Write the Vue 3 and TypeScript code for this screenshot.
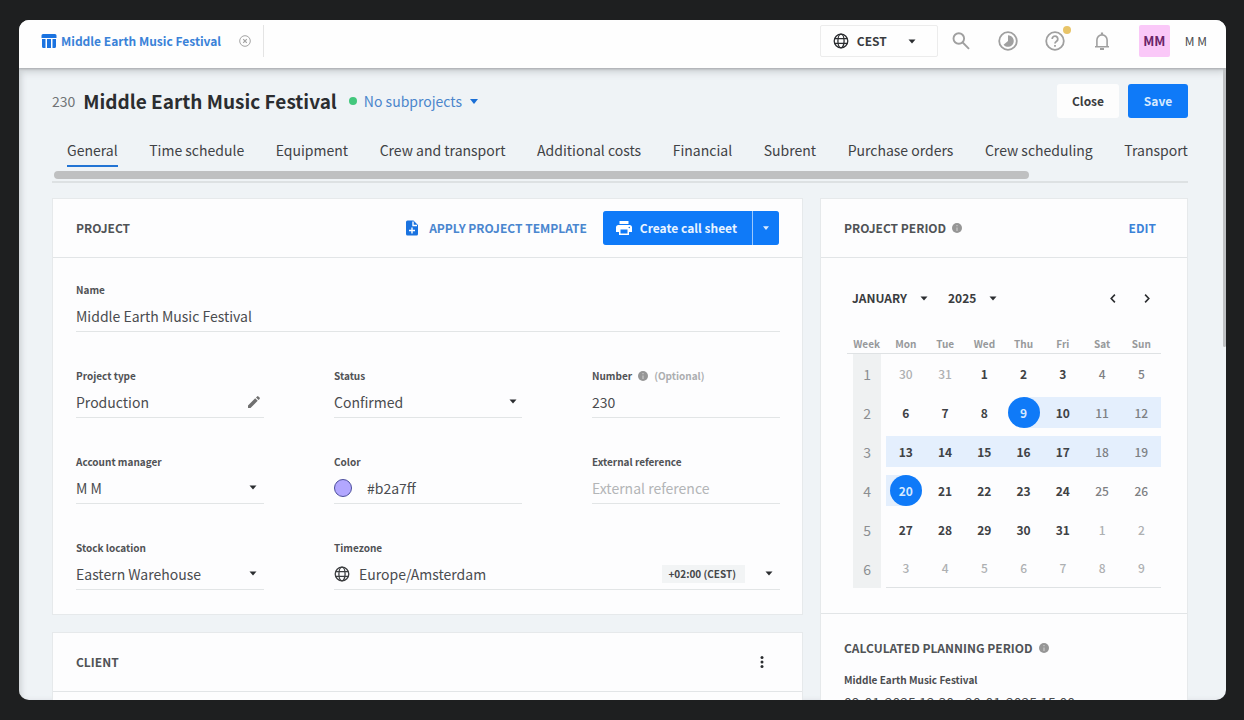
<script setup lang="ts">
import { ref } from 'vue'

interface Day {
  n: number
  kind: 'work' | 'weekend' | 'outside'
  range?: 'start' | 'mid' | 'end'
}

const tabs: string[] = [
  'General', 'Time schedule', 'Equipment', 'Crew and transport', 'Additional costs',
  'Financial', 'Subrent', 'Purchase orders', 'Crew scheduling', 'Transport',
]
const activeTab = ref('General')

const name = ref('Middle Earth Music Festival')
const projectType = ref('Production')
const projectNumber = ref('230')
const color = ref('#b2a7ff')
const externalReference = ref('')

const weekdays: string[] = ['Mon', 'Tue', 'Wed', 'Thu', 'Fri', 'Sat', 'Sun']

// January 2025 starts on a Wednesday, so the first cell is 30 December.
function buildWeeks(): Day[][] {
  return Array.from({ length: 6 }, (_, w) =>
    Array.from({ length: 7 }, (_, d): Day => {
      const offset = w * 7 + d - 1
      if (offset < 1) return { n: offset + 31, kind: 'outside' }
      if (offset > 31) return { n: offset - 31, kind: 'outside' }
      const range = offset === 9 ? 'start' : offset === 20 ? 'end' : offset > 9 && offset < 20 ? 'mid' : undefined
      return { n: offset, kind: d > 4 ? 'weekend' : 'work', range }
    }),
  )
}
const weeks = buildWeeks()
</script>

<template>
  <div class="backdrop">
    <div class="window">
      <header class="topbar">
        <div class="doc-tab">
          <svg class="icon" width="16" height="16" viewBox="0 0 16 16" fill="#1a73e0" aria-hidden="true">
            <path d="M2 1h12a1.5 1.5 0 0 1 1.500 1.500V5H.5V2.500A1.500 1.500 0 0 1 2 1z" />
            <path d="M1 6h3.500v9H2.500A1.500 1.500 0 0 1 1 13.500zM6 6h4v9H6zM11.500 6H15v7.500A1.500 1.500 0 0 1 13.500 15h-2z" />
          </svg>
          <a href="#" class="doc-link">Middle Earth Music Festival</a>
          <button class="plain close-tab" aria-label="Close tab">
            <svg width="12" height="12" viewBox="0 0 12 12" fill="none" stroke="#a3a3a3" aria-hidden="true">
              <circle cx="6" cy="6" r="5.300" />
              <path d="M4.200 4.200l3.600 3.600M7.800 4.200L4.200 7.800" stroke-width="1.200" />
            </svg>
          </button>
        </div>
        <div class="tools">
          <button class="zone">
            <svg width="16" height="16" viewBox="0 0 16 16" fill="none" stroke="#2b2d30" stroke-width="1.300" aria-hidden="true">
              <circle cx="8" cy="8" r="6.800" /><ellipse cx="8" cy="8" rx="3.100" ry="6.800" />
              <path d="M1.700 5.600h12.600M1.700 10.400h12.600" />
            </svg>
            <span class="zone-name">CEST</span>
            <svg class="caret" width="8" height="5" viewBox="0 0 8 5" aria-hidden="true"><path d="M.5.5h7L4 4.500z" /></svg>
          </button>
          <button class="plain tool" aria-label="Search">
            <svg width="20" height="20" viewBox="0 0 20 20" fill="none" stroke="#a0a0a0" stroke-width="1.900" aria-hidden="true">
              <circle cx="7.800" cy="7.500" r="5.300" /><path d="M11.700 11.500l6.300 6.300" />
            </svg>
          </button>
          <button class="plain tool" aria-label="Activity">
            <svg width="20" height="20" viewBox="0 0 20 20" aria-hidden="true">
              <circle cx="10" cy="10" r="8.800" fill="none" stroke="#a0a0a0" stroke-width="1.800" />
              <path d="M10 4.200a5.800 5.800 0 1 1-4.500 9.500L10 10z" fill="#a0a0a0" />
            </svg>
          </button>
          <button class="plain tool help" aria-label="Help">
            <svg width="20" height="20" viewBox="0 0 20 20" fill="none" stroke="#a0a0a0" stroke-width="1.800" aria-hidden="true">
              <circle cx="10" cy="10" r="8.800" />
              <path d="M7.200 8a2.800 2.800 0 1 1 4.400 2.200c-1.100.8-1.600 1.200-1.600 2.400" /><path d="M10 14v1.800" />
            </svg>
            <span class="badge"></span>
          </button>
          <button class="plain tool" aria-label="Notifications">
            <svg width="20" height="20" viewBox="0 0 20 20" fill="none" stroke="#a0a0a0" stroke-width="1.600" aria-hidden="true">
              <path d="M3 15.700h14M4.900 15.500V9a5.100 5.100 0 0 1 10.200 0v6.500" />
              <path d="M10 3.800V1.400" stroke-width="2.200" /><path d="M8 18h4" stroke-width="2" />
            </svg>
          </button>
          <span class="avatar">MM</span>
          <span class="user">M M</span>
        </div>
      </header>

      <main class="page">
        <div class="heading">
          <span class="number">230</span>
          <h1>Middle Earth Music Festival</h1>
          <span class="dot"></span>
          <button class="plain sub">No subprojects
            <svg class="caret" width="8" height="5" viewBox="0 0 8 5" aria-hidden="true"><path d="M0 0h8L4 5z" /></svg>
          </button>
          <div class="actions">
            <button class="btn">Close</button>
            <button class="btn primary">Save</button>
          </div>
        </div>

        <nav class="tabs" aria-label="Project sections">
          <div class="tab-list">
            <a
              v-for="t in tabs" :key="t" href="#" class="tab" :class="{ active: t === activeTab }"
              @click.prevent="activeTab = t"
            >{{ t }}</a>
          </div>
          <div class="track"><div class="thumb"></div></div>
        </nav>

        <div class="columns">
          <div class="left">
            <section class="card">
              <div class="card-head">
                <h2>PROJECT</h2>
                <button class="plain template">
                  <svg width="12" height="16" viewBox="0 0 12 16" aria-hidden="true">
                    <path d="M1.500.5H7.500L12 5v9a1.500 1.500 0 0 1-1.500 1.500h-9A1.500 1.500 0 0 1 0 14V2A1.500 1.500 0 0 1 1.500.5z" fill="#1a73e0" />
                    <path d="M7 1.500V5.500h4M6 7.500v6M3 10.500h6" fill="none" stroke="#fff" stroke-width="1.400" />
                  </svg>
                  APPLY PROJECT TEMPLATE
                </button>
                <div class="split">
                  <button class="split-main">
                    <svg width="16" height="14" viewBox="0 0 16 14" aria-hidden="true">
                      <path d="M3.500 0h9v3h-9zM2.500 4h11A2.500 2.500 0 0 1 16 6.500V11h-3v3H3v-3H0V6.500A2.500 2.500 0 0 1 2.500 4z" fill="#fff" />
                      <path d="M4.500 8.500h7v4h-7z" fill="#0f7af8" /><circle cx="13.300" cy="6.500" r=".8" fill="#0f7af8" />
                    </svg>
                    Create call sheet
                  </button>
                  <button class="split-more" aria-label="More call sheet options">
                    <svg class="caret" width="6" height="4" viewBox="0 0 8 5" aria-hidden="true"><path d="M0 0h8L4 5z" /></svg>
                  </button>
                </div>
              </div>
              <form class="fields" @submit.prevent>
                <div class="field full">
                  <label for="f-name">Name</label>
                  <div class="control"><input id="f-name" v-model="name" type="text"></div>
                </div>
                <div class="field">
                  <label for="f-type">Project type</label>
                  <div class="control">
                    <input id="f-type" v-model="projectType" type="text">
                    <button type="button" class="plain pencil" aria-label="Edit project type">
                      <svg width="12" height="12" viewBox="0 0 12 12" fill="#707070" aria-hidden="true">
                        <path d="M0 9.500L7.200 2.300 9.700 4.800 2.500 12H0zM8 1.500L9.100.4a1 1 0 0 1 1.300 0L11.600 1.600a1 1 0 0 1 0 1.300L10.500 4z" />
                      </svg>
                    </button>
                  </div>
                </div>
                <div class="field">
                  <label for="f-status">Status</label>
                  <div class="control">
                    <select id="f-status"><option>Confirmed</option></select>
                    <svg class="caret narrow" width="8" height="5" viewBox="0 0 8 5" aria-hidden="true"><path d="M.5.5h7L4 4.500z" /></svg>
                  </div>
                </div>
                <div class="field">
                  <div class="label-row">
                    <label for="f-number">Number</label>
                    <svg width="10" height="10" viewBox="0 0 10 10" aria-hidden="true"><circle cx="5" cy="5" r="5" fill="#969696" /><path d="M5 2v1.300M5 4.500V8" stroke="#c9c9c9" stroke-width="1.200" /></svg>
                    <span class="optional">(Optional)</span>
                  </div>
                  <div class="control"><input id="f-number" v-model="projectNumber" type="text"></div>
                </div>
                <div class="field">
                  <label for="f-manager">Account manager</label>
                  <div class="control">
                    <select id="f-manager"><option>M M</option></select>
                    <svg class="caret" width="8" height="5" viewBox="0 0 8 5" aria-hidden="true"><path d="M.5.5h7L4 4.500z" /></svg>
                  </div>
                </div>
                <div class="field">
                  <label for="f-color">Color</label>
                  <div class="control color">
                    <span class="swatch"></span>
                    <input id="f-color" v-model="color" type="text">
                  </div>
                </div>
                <div class="field">
                  <label for="f-ext">External reference</label>
                  <div class="control"><input id="f-ext" v-model="externalReference" type="text" placeholder="External reference"></div>
                </div>
                <div class="field">
                  <label for="f-stock">Stock location</label>
                  <div class="control">
                    <select id="f-stock"><option>Eastern Warehouse</option></select>
                    <svg class="caret" width="8" height="5" viewBox="0 0 8 5" aria-hidden="true"><path d="M.5.5h7L4 4.500z" /></svg>
                  </div>
                </div>
                <div class="field wide">
                  <label for="f-zone">Timezone</label>
                  <div class="control">
                    <svg class="globe" width="16" height="16" viewBox="0 0 16 16" fill="none" stroke="#3c3e40" stroke-width="1.300" aria-hidden="true">
                      <circle cx="8" cy="8" r="6.800" /><ellipse cx="8" cy="8" rx="3.100" ry="6.800" />
                      <path d="M1.700 5.600h12.600M1.700 10.400h12.600" />
                    </svg>
                    <select id="f-zone"><option>Europe/Amsterdam</option></select>
                    <span class="chip">+02:00 (CEST)</span>
                    <svg class="caret" width="8" height="5" viewBox="0 0 8 5" aria-hidden="true"><path d="M.5.5h7L4 4.500z" /></svg>
                  </div>
                </div>
              </form>
            </section>

            <section class="card client">
              <div class="card-head">
                <h2>CLIENT</h2>
                <button class="plain dots" aria-label="Client options">
                  <svg width="4" height="14" viewBox="0 0 4 14" fill="#2b2d30" aria-hidden="true">
                    <circle cx="2" cy="2.500" r="1.500" /><circle cx="2" cy="7" r="1.500" /><circle cx="2" cy="11.500" r="1.500" />
                  </svg>
                </button>
              </div>
            </section>
          </div>

          <aside class="card side">
            <div class="card-head">
              <h2>PROJECT PERIOD</h2>
              <svg class="info" width="10" height="10" viewBox="0 0 10 10" aria-hidden="true"><circle cx="5" cy="5" r="5" fill="#969696" /><path d="M5 2v1.300M5 4.500V8" stroke="#c9c9c9" stroke-width="1.200" /></svg>
              <button class="plain edit">EDIT</button>
            </div>
            <div class="calendar">
              <div class="cal-nav">
                <button class="plain pick">JANUARY <svg class="caret" width="8" height="5" viewBox="0 0 8 5" aria-hidden="true"><path d="M.5.5h7L4 4.500z" /></svg></button>
                <button class="plain pick">2025 <svg class="caret" width="8" height="5" viewBox="0 0 8 5" aria-hidden="true"><path d="M.5.5h7L4 4.500z" /></svg></button>
                <button class="plain step first" aria-label="Previous month">
                  <svg width="6" height="9" viewBox="0 0 6 9" fill="none" stroke="#2b2d30" stroke-width="1.600" aria-hidden="true"><path d="M4.900.6L1.200 4.500l3.700 3.900" /></svg>
                </button>
                <button class="plain step" aria-label="Next month">
                  <svg width="6" height="9" viewBox="0 0 6 9" fill="none" stroke="#2b2d30" stroke-width="1.600" aria-hidden="true"><path d="M1.100.6l3.700 3.900-3.700 3.900" /></svg>
                </button>
              </div>
              <table>
                <thead>
                  <tr><th scope="col">Week</th><th v-for="d in weekdays" :key="d" scope="col">{{ d }}</th></tr>
                </thead>
                <tbody>
                  <tr v-for="(week, i) in weeks" :key="i">
                    <th scope="row"><span class="week">{{ i + 1 }}</span></th>
                    <td v-for="(day, j) in week" :key="j">
                      <div class="day" :class="[day.kind, day.range]"><span>{{ day.n }}</span></div>
                    </td>
                  </tr>
                </tbody>
              </table>
            </div>
            <div class="planning">
              <div class="planning-head">
                <h2>CALCULATED PLANNING PERIOD</h2>
                <svg class="info" width="10" height="10" viewBox="0 0 10 10" aria-hidden="true"><circle cx="5" cy="5" r="5" fill="#969696" /><path d="M5 2v1.300M5 4.500V8" stroke="#c9c9c9" stroke-width="1.200" /></svg>
              </div>
              <h3>Middle Earth Music Festival</h3>
              <p>09-01-2025 12:30 - 20-01-2025 15:00</p>
            </div>
          </aside>
        </div>
        <div class="page-scroll"></div>
      </main>
    </div>
  </div>
</template>

<style>
body {
  background: #1e1f20;
}
</style>

<style scoped>
.backdrop,
.backdrop * {
  box-sizing: border-box;
}

.backdrop {
  height: 100vh;
  padding: 20px 18px 20px 19px;
  background: #1e1f20;
  font-family: "Noto Sans CJK SC", "Noto Sans", sans-serif;
  font-size: 14px;
  line-height: 20px;
  color: #4a4c4f;
}

.window {
  display: flex;
  flex-direction: column;
  height: 100%;
  overflow: hidden;
  border-radius: 10px;
  background: #eff3f6;
}

button,
input,
select {
  margin: 0;
  padding: 0;
  border: 0;
  background: none;
  font: inherit;
  color: inherit;
}

svg {
  display: block;
  flex: none;
}

h1,
h2,
h3,
p {
  margin: 0;
}

a {
  text-decoration: none;
  color: inherit;
}

.plain {
  display: flex;
  align-items: center;
}

.caret {
  fill: #2b2d30;
}

.topbar {
  position: relative;
  z-index: 1;
  display: flex;
  flex: none;
  align-items: flex-start;
  justify-content: space-between;
  height: 48px;
  padding: 5px 19px 0 22px;
  background: #fefefe;
  box-shadow: 0 1px 2px #a9abae, 0 3px 8px #c3c8cb;
}

.doc-tab {
  display: flex;
  align-items: center;
  height: 32px;
  padding-right: 12px;
  border-right: 1px solid #e4e4e4;
}

.doc-link {
  margin-left: 4px;
  font-size: 12px;
  font-weight: 700;
  color: #3a82d8;
}

.close-tab {
  margin-left: 18px;
}

.tools {
  display: flex;
  align-items: center;
  height: 32px;
}

.zone {
  display: flex;
  align-items: center;
  height: 32px;
  width: 118px;
  margin-right: 13px;
  padding: 0 12px;
  border: 1px solid #ececec;
  border-radius: 2px;
}

.zone-name {
  margin: 0 auto 0 8px;
  font-size: 12px;
  font-weight: 700;
  color: #3a3c3f;
}

.zone .caret {
  margin-right: 9px;
}

.tool {
  position: relative;
  margin-right: 27px;
}

.badge {
  position: absolute;
  top: -5px;
  right: -6px;
  width: 8px;
  height: 8px;
  border-radius: 50%;
  background: #e8c468;
}

.avatar {
  width: 31px;
  border-radius: 2px;
  background: #fac8f8;
  color: #6a2468;
  font-size: 13px;
  font-weight: 700;
  line-height: 32px;
  text-align: center;
}

.user {
  margin-left: 15px;
  font-size: 12px;
}

.page {
  position: relative;
  flex: 1;
  min-height: 0;
  padding: 16px 38px 0 33px;
  overflow: hidden;
  box-shadow: inset 4px 0 6px -2px #c9cdd0;
}

.page-scroll {
  position: absolute;
  top: 0;
  right: 0;
  width: 3px;
  height: 279px;
  border-radius: 2px;
  background: #bfc1c3;
}

.heading {
  display: flex;
  align-items: center;
  height: 34px;
}

.number {
  color: #707377;
}

h1 {
  margin: 0 12px 0 8px;
  font-size: 19px;
  font-weight: 700;
  color: #2b2d30;
}

.dot {
  width: 8px;
  height: 8px;
  border-radius: 50%;
  background: #42c77c;
}

.sub {
  gap: 8px;
  margin-left: 7px;
  color: #4b86cc;
}

.sub .caret {
  fill: #1a6fd6;
}

.actions {
  display: flex;
  gap: 9px;
  margin-left: auto;
}

.btn {
  height: 34px;
  width: 62px;
  border-radius: 3px;
  background: #fdfdfd;
  color: #3a3c3f;
  font-size: 12px;
  font-weight: 700;
}

.btn.primary {
  width: 60px;
  background: #0f7af8;
  color: #d6e9ff;
}

.tabs {
  margin-top: 18px;
  border-bottom: 2px solid #dde1e3;
}

.tab-list {
  display: flex;
  justify-content: space-between;
  gap: 24px;
  padding-left: 15px;
  overflow: hidden;
}

.tab {
  flex: none;
  padding: 4px 0 5px;
  border-bottom: 2px solid transparent;
  white-space: nowrap;
  color: #3f4245;
}

.tab.active {
  border-color: #2274d4;
}

.track {
  margin: 4px 0 2px 2px;
}

.thumb {
  width: 86%;
  height: 8px;
  border-radius: 4px;
  background: #bfc0c1;
}

.columns {
  display: grid;
  grid-template-columns: minmax(0, 1fr) 368px;
  gap: 17px;
  margin-top: 15px;
}

.card {
  border: 1px solid #e6e9eb;
  background: #fdfdfe;
}

.left {
  display: flex;
  flex-direction: column;
  gap: 17px;
}

.card-head {
  display: flex;
  align-items: center;
  height: 59px;
  padding: 0 23px;
  border-bottom: 1px solid #e2e5e7;
}

h2 {
  font-size: 12px;
  font-weight: 700;
  color: #505356;
}

.template {
  gap: 11px;
  margin-left: auto;
  font-size: 12px;
  font-weight: 700;
  color: #4a86cf;
}

.split {
  display: flex;
  gap: 1px;
  margin-left: 16px;
  border-radius: 3px;
  overflow: hidden;
  background: #9cc8fb;
}

.split-main,
.split-more {
  display: flex;
  align-items: center;
  height: 34px;
  background: #0f7af8;
  color: #e8f3ff;
}

.split-main {
  gap: 8px;
  padding: 0 15px 0 13px;
  font-size: 12px;
  font-weight: 700;
}

.split-more {
  padding: 0 10px;
}

.split .caret {
  fill: #d9ebff;
}

.fields {
  display: grid;
  grid-template-columns: repeat(3, minmax(0, 1fr));
  gap: 36px 70px;
  padding: 24px 22px 24px 23px;
}

.field {
  display: flex;
  flex-direction: column;
  gap: 2px;
}

.field.full {
  grid-column: 1 / -1;
}

.field.wide {
  grid-column: 2 / -1;
}

label,
.label-row {
  font-size: 10px;
  font-weight: 700;
  line-height: 16px;
  color: #505255;
}

.label-row {
  display: flex;
  align-items: center;
  gap: 6px;
}

.optional {
  color: #acaeb0;
}

.control {
  display: flex;
  align-items: center;
  height: 32px;
  border-bottom: 1px solid #e2e5e6;
}

.control input,
.control select {
  flex: 1;
  min-width: 0;
  height: 24px;
  appearance: none;
  outline: 0;
}

.control input::placeholder {
  color: #b3b5b7;
  opacity: 1;
}

.control .caret {
  margin-right: 7px;
}

.control .narrow {
  margin-right: 5px;
}

.pencil {
  margin-right: 4px;
}

.color {
  gap: 15px;
}

.swatch {
  width: 18px;
  height: 18px;
  border: 1px solid #4c4f9c;
  border-radius: 50%;
  background: #b2a7ff;
}

.globe {
  margin-right: 9px;
}

.chip {
  margin-right: 20px;
  padding: 0 9px 0 6px;
  background: #f2f4f5;
  font-size: 10px;
  font-weight: 700;
  line-height: 18px;
  color: #45474a;
}

.client {
  min-height: 160px;
}

.dots {
  margin-left: auto;
  padding: 0 15px;
}

.info {
  margin-left: 6px;
}

.edit {
  margin-left: auto;
  padding-right: 8px;
  font-size: 12px;
  font-weight: 700;
  color: #3a82d8;
}

.calendar {
  padding: 24px 26px 25px;
  border-bottom: 1px solid #e2e5e7;
}

.cal-nav {
  display: flex;
  align-items: center;
  height: 32px;
  padding: 0 11px 0 5px;
}

.pick {
  gap: 13px;
  margin-right: 20px;
  font-size: 12px;
  font-weight: 700;
  color: #3a3c3f;
}

.step {
  margin-left: 28px;
}

.step.first {
  margin-left: auto;
}

table {
  width: 100%;
  margin-top: 21px;
  border-collapse: collapse;
  table-layout: fixed;
}

thead th {
  height: 18px;
  padding: 0;
  font-size: 10px;
  font-weight: 700;
  line-height: 17px;
  color: #97999b;
  border-bottom: 1px solid #dfe2e4;
}

tbody th,
tbody td {
  height: 39px;
  padding: 0;
}

tbody tr:last-child td {
  border-bottom: 1px solid #dfe2e4;
}

.week {
  display: block;
  height: 39px;
  margin: 0 5px 0 6px;
  background: #eff1f2;
  font-weight: 400;
  line-height: 40px;
  color: #8b8e91;
}

.day {
  display: flex;
  justify-content: center;
  height: 31px;
  font-size: 12px;
  font-weight: 700;
  line-height: 31px;
  color: #3f4245;
}

.day.weekend {
  font-weight: 500;
  color: #7d8083;
}

.day.outside {
  font-weight: 500;
  color: #aeb0b2;
}

.day.mid {
  background: #e4effd;
}

.day.start {
  background: linear-gradient(90deg, transparent 50%, #e4effd 50%);
}

.day.end {
  background: linear-gradient(90deg, #e4effd 50%, transparent 50%);
}

.day.start span,
.day.end span {
  width: 32px;
  border-radius: 50%;
  background: #0f7af8;
  color: #d6e9ff;
  text-align: center;
}

.planning {
  padding: 24px 23px;
}

.planning-head {
  display: flex;
  align-items: center;
}

h3 {
  margin-top: 12px;
  font-size: 10px;
  font-weight: 700;
  color: #4a4c4f;
}

.planning p {
  line-height: 24px;
  color: #4a4c4f;
}
</style>
